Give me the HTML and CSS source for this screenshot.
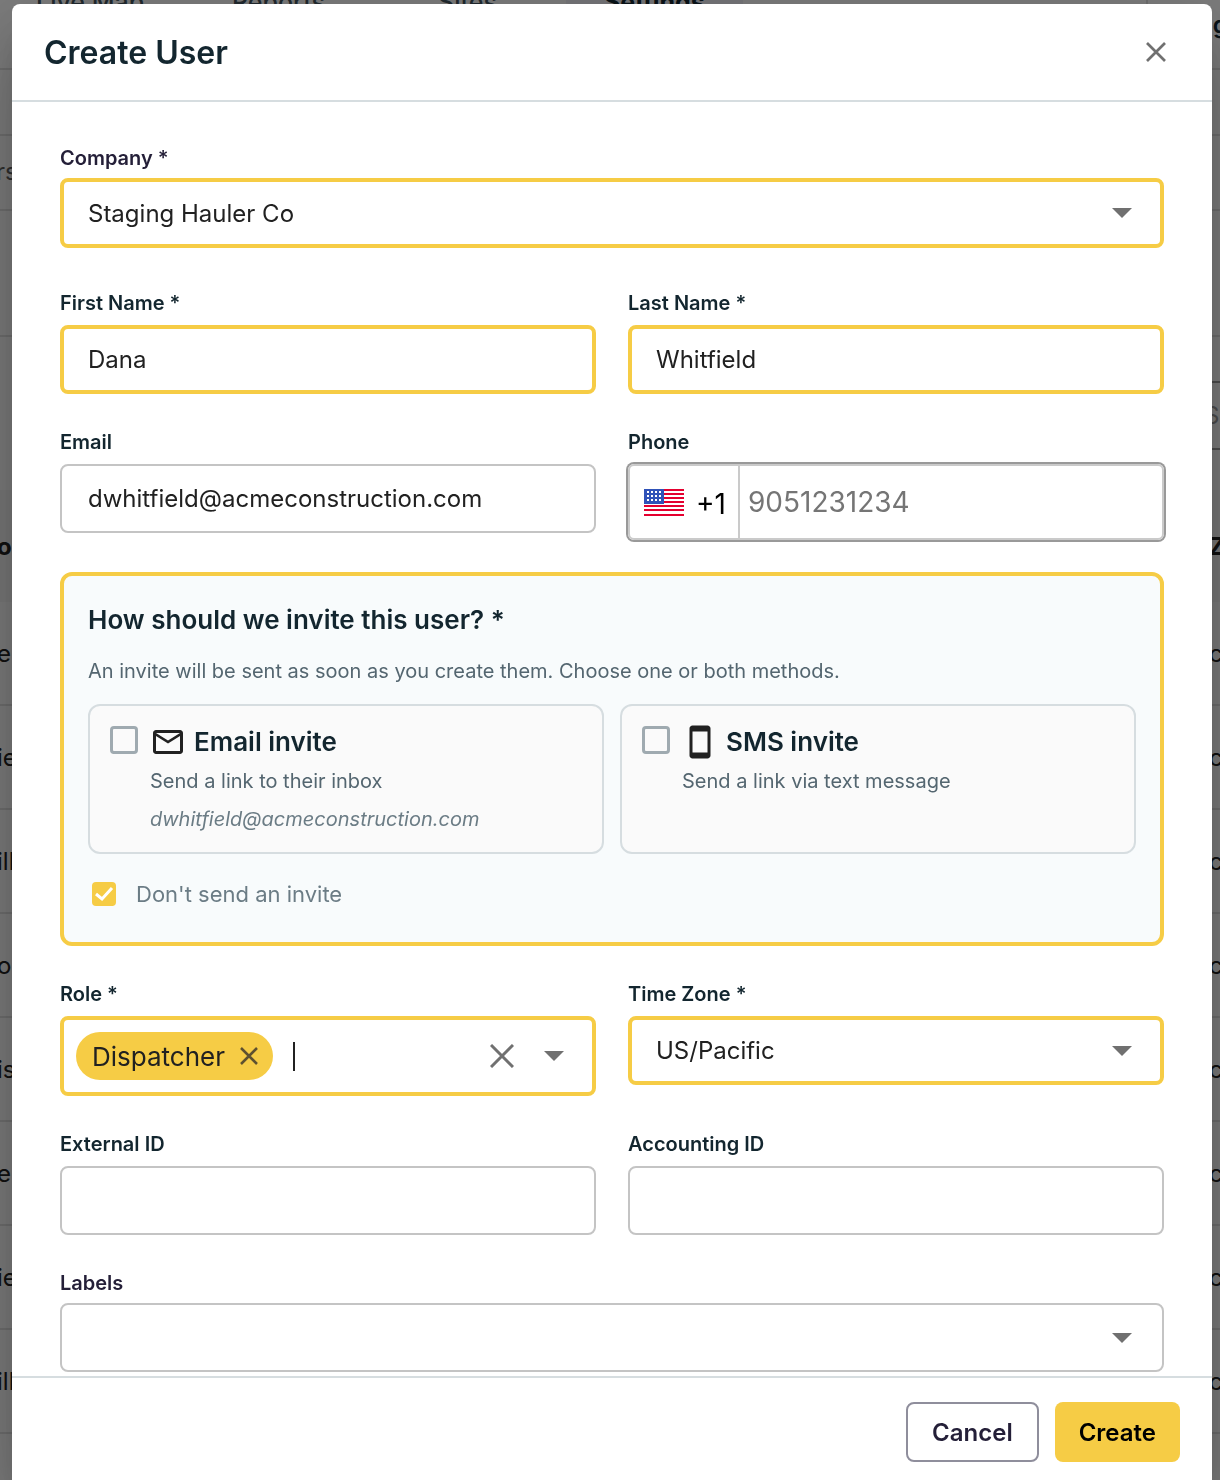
FILE: index.html
```html
<!DOCTYPE html>
<html lang="en">
<head>
  <meta charset="UTF-8">
  <meta name="viewport" content="width=device-width, initial-scale=1.0">
  <title>Create User</title>
  <link rel="stylesheet" href="styles.css">
</head>
<body>

  <!-- Page behind the dialog -->
  <div class="page" aria-hidden="true">
    <div class="topbar">
      <nav class="tabs">
        <span class="tab tab-map">Live Map</span>
        <span class="tab tab-reports">Reports</span>
        <span class="tab tab-sites">Sites</span>
        <span class="tab tab-active">Settings</span>
      </nav>
      <span class="account">ng</span>
    </div>
    <div class="band"></div>
    <div class="band crumbs">rs</div>
    <div class="band filters"></div>
    <div class="search-row"><div class="search">Se</div></div>
    <div class="list-row list-head"><span>o</span><span>Zo</span></div>
    <div class="list-row"><span>e</span><span>c</span></div>
    <div class="list-row"><span>ie</span><span>c</span></div>
    <div class="list-row"><span>ill</span><span>c</span></div>
    <div class="list-row"><span>or</span><span>c</span></div>
    <div class="list-row"><span>is</span><span>c</span></div>
    <div class="list-row"><span>e</span><span>c</span></div>
    <div class="list-row"><span>ie</span><span>c</span></div>
    <div class="list-row"><span>ill</span><span>c</span></div>
    <div class="list-row"></div>
  </div>

  <div class="overlay">
    <form class="modal" role="dialog" aria-labelledby="modal-title">
      <header class="modal-header">
        <h2 id="modal-title">Create User</h2>
        <button type="button" class="icon-btn" aria-label="Close">
          <svg width="20" height="20" viewBox="0 0 20 20"><path d="M1 1 19 19M19 1 1 19" stroke="currentColor" stroke-width="2.700"/></svg>
        </button>
      </header>

      <div class="modal-body">
        <div class="row row-company">
          <div class="field field-outlined">
            <label for="company">Company *</label>
            <div class="select-box">
              <select id="company" class="control required">
                <option>Staging Hauler Co</option>
              </select>
              <svg class="arrow" width="20" height="10" viewBox="0 0 20 10"><path d="M0 0h20L10 10z"/></svg>
            </div>
          </div>
        </div>

        <div class="row">
          <div class="field">
            <label for="first-name">First Name *</label>
            <input type="text" id="first-name" class="control required" value="Dana">
          </div>
          <div class="field">
            <label for="last-name">Last Name *</label>
            <input type="text" id="last-name" class="control required" value="Whitfield">
          </div>
        </div>

        <div class="row row-contact">
          <div class="field">
            <label for="email">Email</label>
            <input type="email" id="email" class="control" value="dwhitfield@acmeconstruction.com">
          </div>
          <div class="field">
            <label for="phone">Phone</label>
            <div class="phone-box">
              <button type="button" class="country" aria-label="Country code +1">
                <svg width="40" height="27" viewBox="0 0 40 27">
                  <rect width="40" height="27" fill="#fff"/>
                  <path d="M0 1h40M0 5h40M0 9h40M0 13h40M0 17h40M0 21h40M0 26h40" stroke="#e4002f" stroke-width="2"/>
                  <rect width="20" height="15" fill="#2f52b8"/>
                  <path d="M3 3h15M3 7h15M3 11h15" stroke="#fff" stroke-width="2" stroke-dasharray="2 2"/>
                </svg>
                <span>+1</span>
              </button>
              <input type="tel" id="phone" placeholder="9051231234">
            </div>
          </div>
        </div>

        <section class="invite">
          <h3>How should we invite this user? *</h3>
          <p class="invite-hint">An invite will be sent as soon as you create them. Choose one or both methods.</p>
          <div class="invite-cards">
            <div class="invite-card">
              <input type="checkbox" id="invite-email" class="check">
              <div>
                <label for="invite-email" class="invite-title">
                  <svg width="36" height="36" viewBox="0 0 24 24"><path d="M22 6c0-1.100-.9-2-2-2H4c-1.100 0-2 .9-2 2v12c0 1.100.9 2 2 2h16c1.100 0 2-.9 2-2V6zm-2 0-8 5-8-5h16zm0 12H4V8l8 5 8-5v10z"/></svg>
                  Email invite
                </label>
                <p>Send a link to their inbox</p>
                <p class="invite-address">dwhitfield@acmeconstruction.com</p>
              </div>
            </div>
            <div class="invite-card">
              <input type="checkbox" id="invite-sms" class="check">
              <div>
                <label for="invite-sms" class="invite-title">
                  <svg width="36" height="36" viewBox="0 0 24 24"><path d="M17 1H7c-1.100 0-2 .9-2 2v18c0 1.100.9 2 2 2h10c1.100 0 2-.9 2-2V3c0-1.100-.9-2-2-2zm0 18H7V5h10v14z"/></svg>
                  SMS invite
                </label>
                <p>Send a link via text message</p>
              </div>
            </div>
          </div>
          <label class="no-invite">
            <span class="check-box">
              <input type="checkbox" class="check" checked>
              <svg width="24" height="24" viewBox="0 0 24 24"><path d="M4 12l6 5 10-11" fill="none" stroke="#fff" stroke-width="3"/></svg>
            </span>
            Don't send an invite
          </label>
        </section>

        <div class="row">
          <div class="field">
            <label for="role">Role *</label>
            <div class="role-box required">
              <span class="chip">
                Dispatcher
                <button type="button" class="icon-btn" aria-label="Remove Dispatcher">
                  <svg width="18" height="18" viewBox="0 0 18 18"><path d="M1 1 17 17M17 1 1 17" stroke="currentColor" stroke-width="2.500"/></svg>
                </button>
              </span>
              <span class="caret"></span>
              <input type="text" id="role">
              <button type="button" class="icon-btn" aria-label="Clear">
                <svg width="24" height="24" viewBox="0 0 24 24"><path d="M1 1 23 23M23 1 1 23" stroke="currentColor" stroke-width="3"/></svg>
              </button>
              <button type="button" class="icon-btn" aria-label="Open">
                <svg width="20" height="10" viewBox="0 0 20 10"><path d="M0 0h20L10 10z" fill="currentColor"/></svg>
              </button>
            </div>
          </div>
          <div class="field">
            <label for="time-zone">Time Zone *</label>
            <div class="select-box">
              <select id="time-zone" class="control required">
                <option>US/Pacific</option>
              </select>
              <svg class="arrow" width="20" height="10" viewBox="0 0 20 10"><path d="M0 0h20L10 10z"/></svg>
            </div>
          </div>
        </div>

        <div class="row">
          <div class="field">
            <label for="external-id">External ID</label>
            <input type="text" id="external-id" class="control">
          </div>
          <div class="field">
            <label for="accounting-id">Accounting ID</label>
            <input type="text" id="accounting-id" class="control">
          </div>
        </div>

        <div class="row row-last">
          <div class="field field-outlined">
            <label for="labels">Labels</label>
            <div class="select-box">
              <select id="labels" class="control">
                <option></option>
              </select>
              <svg class="arrow" width="20" height="10" viewBox="0 0 20 10"><path d="M0 0h20L10 10z"/></svg>
            </div>
          </div>
        </div>
      </div>

      <footer class="modal-footer">
        <button type="button" class="btn btn-cancel">Cancel</button>
        <button type="submit" class="btn btn-create">Create</button>
      </footer>
    </form>
  </div>

</body>
</html>
```
FILE: styles.css
```css
/* Reset default styles */
* {
  margin: 0;
  padding: 0;
  box-sizing: border-box;
}

body {
  font-family: Inter, "Liberation Sans", sans-serif;
  font-size: 24px;
  color: #212121;
  background: #fff;
  overflow: hidden;
}

button,
input,
select {
  font: inherit;
  color: inherit;
}

button {
  cursor: pointer;
}

/* Page behind the dialog */
.page {
  height: 100vh;
  overflow: hidden;
  background: #f8f8f8;
}

.topbar {
  display: flex;
  justify-content: space-between;
  height: 70px;
  border-bottom: 2px solid #dcdcdc;
  overflow: hidden;
}

.tabs {
  display: flex;
  font-size: 25px;
  line-height: 4px;
  font-weight: 500;
  color: #41535c;
}

.tab-map {
  width: 232px;
  padding-left: 36px;
}

.tab-reports {
  width: 206px;
}

.tab-sites {
  width: 128px;
}

.tab-active {
  padding: 0 38px;
  font-weight: 700;
  color: #13262f;
  background: #ebecf2;
}

.account {
  width: 74px;
  padding-left: 50px;
  border-left: 2px solid #dcdcdc;
  line-height: 50px;
  font-weight: 600;
  color: #13262f;
}

.band {
  height: 66px;
  border-bottom: 2px solid #dcdcdc;
}

.crumbs {
  height: 75px;
  line-height: 72px;
  text-indent: -4px;
  color: #5c5c5c;
}

.filters {
  height: 126px;
}

.search-row {
  display: flex;
  justify-content: flex-end;
  height: 153px;
  padding-top: 44px;
}

.search {
  width: 120px;
  height: 69px;
  padding-left: 102px;
  border: 2px solid #999;
  border-right: none;
  line-height: 65px;
  color: #999;
  overflow: hidden;
}

.list-row {
  display: flex;
  justify-content: space-between;
  align-items: center;
  height: 104px;
  border-bottom: 2px solid #dcdcdc;
}

.list-row span:first-child {
  text-indent: -3px;
}

.list-row span:last-child {
  width: 11px;
}

.list-head {
  height: 112px;
  border-bottom: none;
  font-weight: 700;
  background: #f0f0f0;
}

/* Dialog */
.overlay {
  position: fixed;
  inset: 0;
  display: flex;
  padding: 4px 8px 0 12px;
  background: rgba(0, 0, 0, 0.5);
}

.modal {
  flex: 1;
  display: flex;
  flex-direction: column;
  background: #fff;
  border-radius: 8px 8px 0 0;
  box-shadow: 0 22px 30px -14px rgba(0, 0, 0, 0.2), 0 48px 76px 6px rgba(0, 0, 0, 0.14), 0 18px 92px 16px rgba(0, 0, 0, 0.12);
}

.modal-header {
  display: flex;
  align-items: center;
  justify-content: space-between;
  height: 98px;
  padding: 0 46px 0 32px;
  border-bottom: 2px solid #d6dde0;
}

.modal-header h2 {
  font-size: 32px;
  font-weight: 600;
  color: #13262f;
}

.icon-btn {
  display: flex;
  border: none;
  background: none;
  color: #707070;
}

.modal-body {
  flex: 1;
  min-height: 0;
  padding: 44px 48px 0;
  overflow-y: auto;
}

/* Fields */
.row {
  display: flex;
  align-items: flex-start;
  gap: 32px;
  margin-bottom: 36px;
}

.row-company {
  margin-bottom: 43px;
}

.row-contact {
  margin-bottom: 32px;
}

.row-last {
  margin-bottom: 0;
}

.field {
  flex: 1;
  min-width: 0;
  display: flex;
  flex-direction: column;
  gap: 10px;
}

.field > label {
  font-size: 20px;
  line-height: 24px;
  font-weight: 600;
  color: #13262f;
}

.field-outlined {
  gap: 8px;
}

.field-outlined > label {
  color: #241f38;
}

.control {
  width: 100%;
  height: 69px;
  padding: 0 26px;
  border: 2px solid #c4c4c4;
  border-radius: 8px;
  background: #fff;
  outline: none;
  appearance: none;
}

.required {
  padding: 0 24px;
  border: 4px solid #f6cc45;
}

.row-company .control {
  height: 70px;
}

.select-box {
  display: flex;
  align-items: center;
  position: relative;
}

.arrow {
  position: absolute;
  right: 32px;
  fill: #707070;
  pointer-events: none;
}

/* Phone */
.phone-box {
  display: flex;
  height: 76px;
  border: 2px solid #cacaca;
  border-radius: 6px;
  box-shadow: 0 0 0 2px #999;
}

.country {
  display: flex;
  align-items: center;
  gap: 12px;
  width: 110px;
  padding-left: 14px;
  border: none;
  border-right: 2px solid #cacaca;
  background: none;
  font-size: 28px;
  color: #000;
}

.country span {
  padding-top: 3px;
}

.phone-box input {
  flex: 1;
  min-width: 0;
  padding: 0 8px;
  border: none;
  outline: none;
  background: none;
  font-size: 28px;
}

.phone-box input::placeholder {
  color: #757575;
}

/* Invite panel */
.invite {
  margin-bottom: 36px;
  padding: 28px 24px 32px;
  border: 4px solid #f6cc45;
  border-radius: 12px;
  background: #f8fbfc;
}

.invite h3 {
  font-size: 26px;
  line-height: 32px;
  font-weight: 600;
  color: #13262f;
}

.invite-hint {
  margin: 21px 0 19px;
  font-size: 20px;
  line-height: 28px;
  color: #546670;
}

.invite-cards {
  display: grid;
  grid-template-columns: 1fr 1fr;
  gap: 16px;
}

.invite-card {
  display: flex;
  gap: 12px;
  height: 150px;
  padding: 18px 20px;
  border: 2px solid #d6dde0;
  border-radius: 12px;
  background: #fafafa;
}

.invite-card p {
  margin-bottom: 10px;
  font-size: 20px;
  line-height: 28px;
  color: #546670;
}

.invite-card .invite-address {
  font-style: italic;
  color: #6b7c85;
}

.invite-title {
  display: flex;
  align-items: center;
  gap: 8px;
  margin-bottom: 7px;
  font-size: 26px;
  line-height: 36px;
  font-weight: 600;
  color: #13262f;
}

.invite-title svg {
  fill: #212121;
}

.check {
  flex: none;
  width: 28px;
  height: 28px;
  margin-top: 2px;
  border: 3px solid #9faab0;
  border-radius: 4px;
  appearance: none;
}

.no-invite {
  display: flex;
  align-items: center;
  gap: 20px;
  margin-top: 24px;
  padding-left: 4px;
  font-size: 22px;
  line-height: 32px;
  color: #6b7c85;
}

.check-box {
  display: flex;
  position: relative;
}

.check-box svg {
  position: absolute;
  inset: 0;
}

.check-box .check {
  width: 24px;
  height: 24px;
  margin: 0;
  border: none;
  background: #f6cc45;
}

/* Role */
.role-box {
  display: flex;
  align-items: center;
  height: 80px;
  padding: 0 28px 0 12px;
  border-radius: 8px;
}

.role-box > .icon-btn {
  margin-left: 30px;
}

.role-box input {
  flex: 1;
  min-width: 0;
  border: none;
  outline: none;
  background: none;
}

.chip {
  display: flex;
  align-items: center;
  gap: 15px;
  height: 48px;
  padding: 0 15px 0 16px;
  border-radius: 24px;
  background: #f6cc45;
  font-size: 26px;
}

.chip .icon-btn {
  color: #5e5130;
}

.caret {
  width: 2px;
  height: 29px;
  margin-left: 20px;
  background: #212121;
}

/* Footer */
.modal-footer {
  display: flex;
  justify-content: flex-end;
  gap: 16px;
  padding: 24px 32px 18px;
  border-top: 2px solid #d6dde0;
}

.btn {
  height: 60px;
  padding: 0 24px;
  border: none;
  border-radius: 8px;
  font-weight: 600;
}

.btn-cancel {
  border: 2px solid #8f8e9c;
  background: #fff;
  color: #241f38;
}

.btn-create {
  background: #f6cc45;
  color: #000;
}
```
